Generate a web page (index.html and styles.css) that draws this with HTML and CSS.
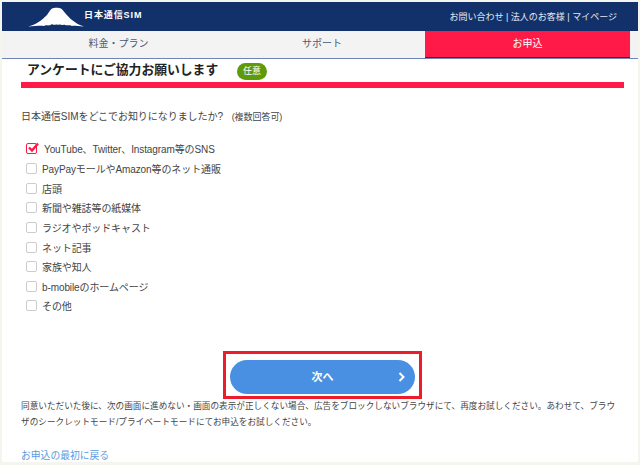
FILE: index.html
```html
<!DOCTYPE html>
<html lang="ja">
<head>
  <meta charset="UTF-8">
  <title>日本通信SIM</title>
  <link rel="stylesheet" href="styles.css">
</head>
<body>
<div class="page">
  <header class="top">
    <div class="logo">
      <svg class="logo-mark" width="56" height="20" viewBox="0 0 56 20">
        <path fill="#fff" d="M0 19.5 C8 18 14 13 19 8 C21 5 22 3 24 1.5 C26 0.5 31 0.5 33 1.5 C36 4 39 9 44 13 C47 15.500 51 18 56 19.500 C50 19.500 47 18.500 44 19 C41 17.500 39 19 36 17.500 C34 19 32 16.500 30 18 C28 16.500 26 19 24 17 C21 19.500 19 17.500 16 19 C11 18.500 6 19.500 0 19.500 Z"/>
      </svg>
      <span class="logo-text">日本通信SIM</span>
    </div>
    <nav class="top-links">お問い合わせ | 法人のお客様 | マイページ</nav>
  </header>

  <div class="tabs">
    <div class="tab tab-plan">料金・プラン</div>
    <div class="tab tab-support">サポート</div>
    <div class="tab tab-apply">お申込</div>
  </div>

  <main class="content">
    <div class="title-row">
      <h1>アンケートにご協力お願いします</h1>
      <span class="badge">任意</span>
    </div>
    <div class="title-bar"></div>

    <p class="question">日本通信SIMをどこでお知りになりましたか? <small>(複数回答可)</small></p>

    <ul class="options">
      <li class="checked">
        <span class="box">
          <svg width="13" height="13" viewBox="0 0 13 13"><path fill="none" stroke="#ff1a47" stroke-width="2.400" d="M3 5.500 L6 8.500 L12 1.500"/></svg>
        </span>
        YouTube、Twitter、Instagram等のSNS
      </li>
      <li><span class="box"></span>PayPayモールやAmazon等のネット通販</li>
      <li><span class="box"></span>店頭</li>
      <li><span class="box"></span>新聞や雑誌等の紙媒体</li>
      <li><span class="box"></span>ラジオやポッドキャスト</li>
      <li><span class="box"></span>ネット記事</li>
      <li><span class="box"></span>家族や知人</li>
      <li><span class="box"></span>b-mobileのホームページ</li>
      <li><span class="box"></span>その他</li>
    </ul>

    <div class="next-wrap">
      <a href="#" class="next-button">次へ
        <svg class="next-arrow" width="7" height="10" viewBox="0 0 7 10"><path fill="none" stroke="#fff" stroke-width="2" d="M1.500 1 L5.500 5 L1.500 9"/></svg>
      </a>
    </div>

    <p class="note">同意いただいた後に、次の画面に進めない・画面の表示が正しくない場合、広告をブロックしないブラウザにて、再度お試しください。あわせて、ブラウザのシークレットモード/プライベートモードにてお申込をお試しください。</p>

    <a href="#" class="back-link">お申込の最初に戻る</a>
  </main>
</div>
</body>
</html>
```

FILE: styles.css
```css
/* Base */
html, body {
  height: 100%;
}

body {
  margin: 0;
  padding: 2px;
  box-sizing: border-box;
  background: #f5f5f0;
  font-family: "Liberation Sans", "Noto Sans CJK JP", sans-serif;
  color: #333;
  overflow: hidden;
}

.page {
  height: 460px;
  background: #fff;
  overflow: hidden;
}

/* Header */
.top {
  display: flex;
  justify-content: space-between;
  align-items: center;
  height: 29px;
  padding: 0 21px 0 26px;
  background: #12316b;
  color: #fff;
}

.logo {
  display: flex;
  align-items: center;
}

.logo-mark {
  margin-top: 1px;
}

.logo-text {
  margin: -4px 0 0 0;
  font-size: 9px;
  font-weight: bold;
  letter-spacing: 0.9px;
}

.top-links {
  font-size: 9px;
  color: #e4e8f0;
}

/* Tabs */
.tabs {
  display: grid;
  grid-template-columns: 211px 212px 205px 1fr;
  height: 27px;
  background: #f3f3f3;
  border-bottom: 1px solid #6d86b5;
}

.tab {
  font-size: 10px;
  line-height: 26px;
  text-align: center;
  color: #4a5a78;
}

.tab-plan {
  padding-left: 22px;
}

.tab-support {
  padding-left: 6px;
}

.tab-apply {
  background: #ff1a47;
  color: #fff;
  border-bottom: 1px solid #12316b;
}

/* Content */
.content {
  padding: 0 14px 0 19px;
}

.title-row {
  display: flex;
  align-items: center;
  height: 23px;
  padding-left: 6px;
}

h1 {
  margin: -5px 0 0;
  font-size: 12.800px;
  font-weight: bold;
  color: #222;
  width: 210px;
  white-space: nowrap;
}

.badge {
  width: 30px;
  height: 17px;
  margin-top: 1px;
  border-radius: 9px;
  background: #5f9a0a;
  color: #fff;
  font-size: 9px;
  line-height: 17px;
  text-align: center;
}

.title-bar {
  height: 6px;
  background: #ff1a47;
}

.question {
  margin: 22px 0 0;
  font-size: 10px;
  letter-spacing: -0.05px;
  line-height: 13px;
  color: #444;
}

.question small {
  margin-left: 6px;
  font-size: 9px;
}

/* Options */
.options {
  list-style: none;
  margin: 15px 0 0;
  padding: 0 0 0 5px;
}

.options li {
  display: flex;
  align-items: center;
  height: 19.650px;
  font-size: 10px;
  letter-spacing: -0.1px;
  color: #444;
}

.box {
  position: relative;
  flex: none;
  width: 9px;
  height: 9px;
  margin-right: 5px;
  border: 1px solid #ccc;
  border-radius: 2px;
  background: #fff;
}

.checked .box {
  border-color: #ff1a47;
  margin-right: 7px;
}

.checked .box svg {
  position: absolute;
  top: -2px;
  left: -1px;
}

/* Next button */
.next-wrap {
  width: 187px;
  height: 36px;
  margin: 35.500px 0 0 202px;
  padding: 6px 3px 0;
  border: 3px solid #ec1c2b;
}

.next-button {
  position: relative;
  display: block;
  height: 34px;
  margin-left: 1px;
  width: 185px;
  border-radius: 17px;
  background: #4a90e2;
  color: #fff;
  font-size: 11px;
  font-weight: bold;
  line-height: 34px;
  text-align: center;
  text-decoration: none;
}

.next-arrow {
  position: absolute;
  top: 12px;
  right: 10px;
}

.note {
  margin: -1px 0 0;
  padding-right: 4px;
  font-size: 8.650px;
  line-height: 16px;
  color: #444;
}

.back-link {
  display: block;
  margin-top: 19px;
  font-size: 9.800px;
  line-height: 14px;
  color: #5b9be0;
  text-decoration: none;
}
```
